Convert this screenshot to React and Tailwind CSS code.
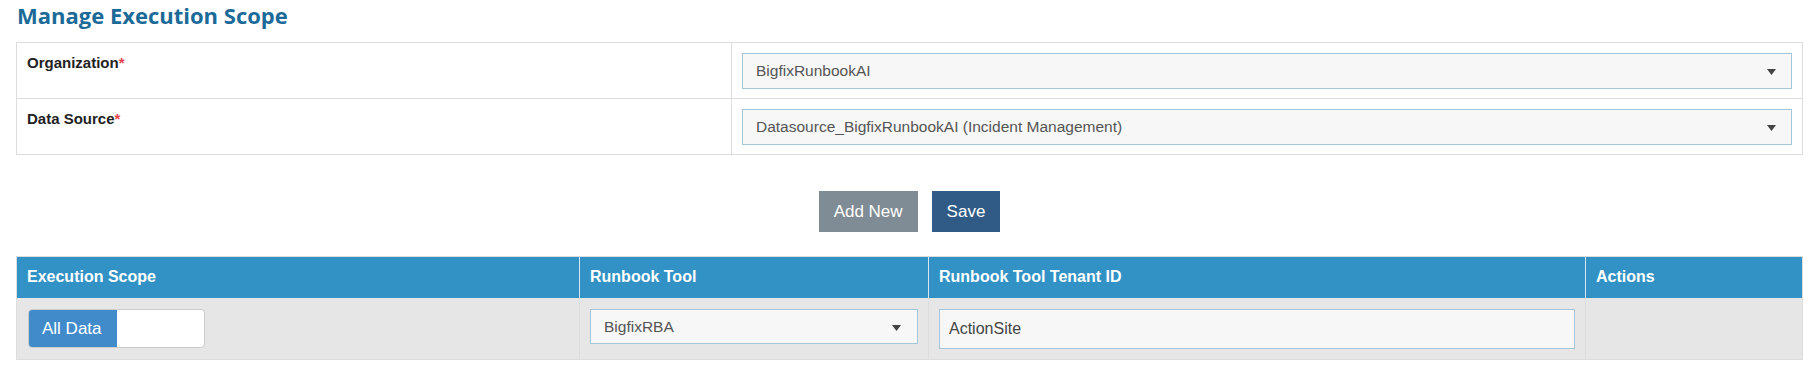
import { useState } from "react";

const arial = { fontFamily: '"Liberation Sans", Arial, sans-serif' };

function Caret() {
  return (
    <svg width="9" height="6" viewBox="0 0 9 6" className="shrink-0">
      <polygon points="0,0 9,0 4.5,6" fill="#444" />
    </svg>
  );
}

function SelectBox({ value, className = "" }) {
  return (
    <div
      className={
        "flex items-center justify-between border border-[#a3c6d8] bg-[#f7f7f7] pl-[13px] pr-[15px] text-[15.5px] text-[#555] " +
        className
      }
    >
      <span>{value}</span>
      <span className="pt-[2px]">
        <Caret />
      </span>
    </div>
  );
}

function FieldRow({ label, value, last }) {
  return (
    <div className={"grid grid-cols-[714px_1fr] " + (last ? "" : "border-b border-[#ddd]")}>
      <div className="px-[10px] pt-[10px] text-[15px] font-bold leading-5 text-[#222]">
        {label}
        <span className="text-[#e2454c]">*</span>
      </div>
      <div className="border-l border-[#ddd] p-[10px] pb-[9px]">
        <SelectBox value={value} className="h-[36px]" />
      </div>
    </div>
  );
}

function ScopeToggle() {
  const [allData, setAllData] = useState(true);
  return (
    <button
      type="button"
      onClick={() => setAllData(!allData)}
      className="ml-px flex h-[39px] w-[177px] overflow-hidden rounded-[4px] border border-[#ccc] bg-white text-[17px]"
    >
      <span
        className={
          "flex h-full w-[88px] items-center pl-[13px] " +
          (allData ? "bg-[#428bca] text-white" : "bg-white text-[#333]")
        }
      >
        All Data
      </span>
    </button>
  );
}

export default function App() {
  const [tenant, setTenant] = useState("ActionSite");

  return (
    <div className="min-h-[370px] bg-white pl-4 pr-2" style={arial}>
      <h1
        className="pl-px text-[22px] font-bold leading-[30px] text-[#1b6a98]"
        style={{ fontFamily: '"Open Sans", sans-serif' }}
      >
        Manage Execution Scope
      </h1>

      <div className="mt-3 border border-[#ddd]">
        <FieldRow label="Organization" value="BigfixRunbookAI" />
        <FieldRow label="Data Source" value="Datasource_BigfixRunbookAI (Incident Management)" last />
      </div>

      <div className="mt-[36px] flex justify-center gap-[14px] text-[17px] text-white">
        <button type="button" className="h-[41px] bg-[#7f8c95] px-[15px]">
          Add New
        </button>
        <button type="button" className="h-[41px] bg-[#315b87] px-[15px]">
          Save
        </button>
      </div>

      <div className="mt-[24px] border border-[#ddd]">
        <div className="grid grid-cols-[562px_349px_657px_1fr] bg-[#3292c5] text-[16px] font-bold leading-5 text-white">
          <div className="px-[10px] pb-[11px] pt-[10px]">Execution Scope</div>
          <div className="border-l border-[#d7e6ef] px-[10px] pb-[11px] pt-[10px]">Runbook Tool</div>
          <div className="border-l border-[#d7e6ef] px-[10px] pb-[11px] pt-[10px]">Runbook Tool Tenant ID</div>
          <div className="border-l border-[#d7e6ef] px-[10px] pb-[11px] pt-[10px]">Actions</div>
        </div>
        <div className="grid grid-cols-[562px_349px_657px_1fr] bg-[#e6e6e6]">
          <div className="px-[10px] pb-[11px] pt-[11px]">
            <ScopeToggle />
          </div>
          <div className="border-l border-[#ddd] px-[10px] pt-[11px]">
            <SelectBox value="BigfixRBA" className="h-[35px] pr-[16px]" />
          </div>
          <div className="border-l border-[#ddd] px-[10px] pt-[11px]">
            <input
              value={tenant}
              onChange={(e) => setTenant(e.target.value)}
              style={arial}
              className="h-[40px] w-full border border-[#a3c6d8] bg-[#f7f7f7] px-[9px] text-[16px] text-[#444] outline-none"
            />
          </div>
          <div className="border-l border-[#ddd]" />
        </div>
      </div>
    </div>
  );
}
